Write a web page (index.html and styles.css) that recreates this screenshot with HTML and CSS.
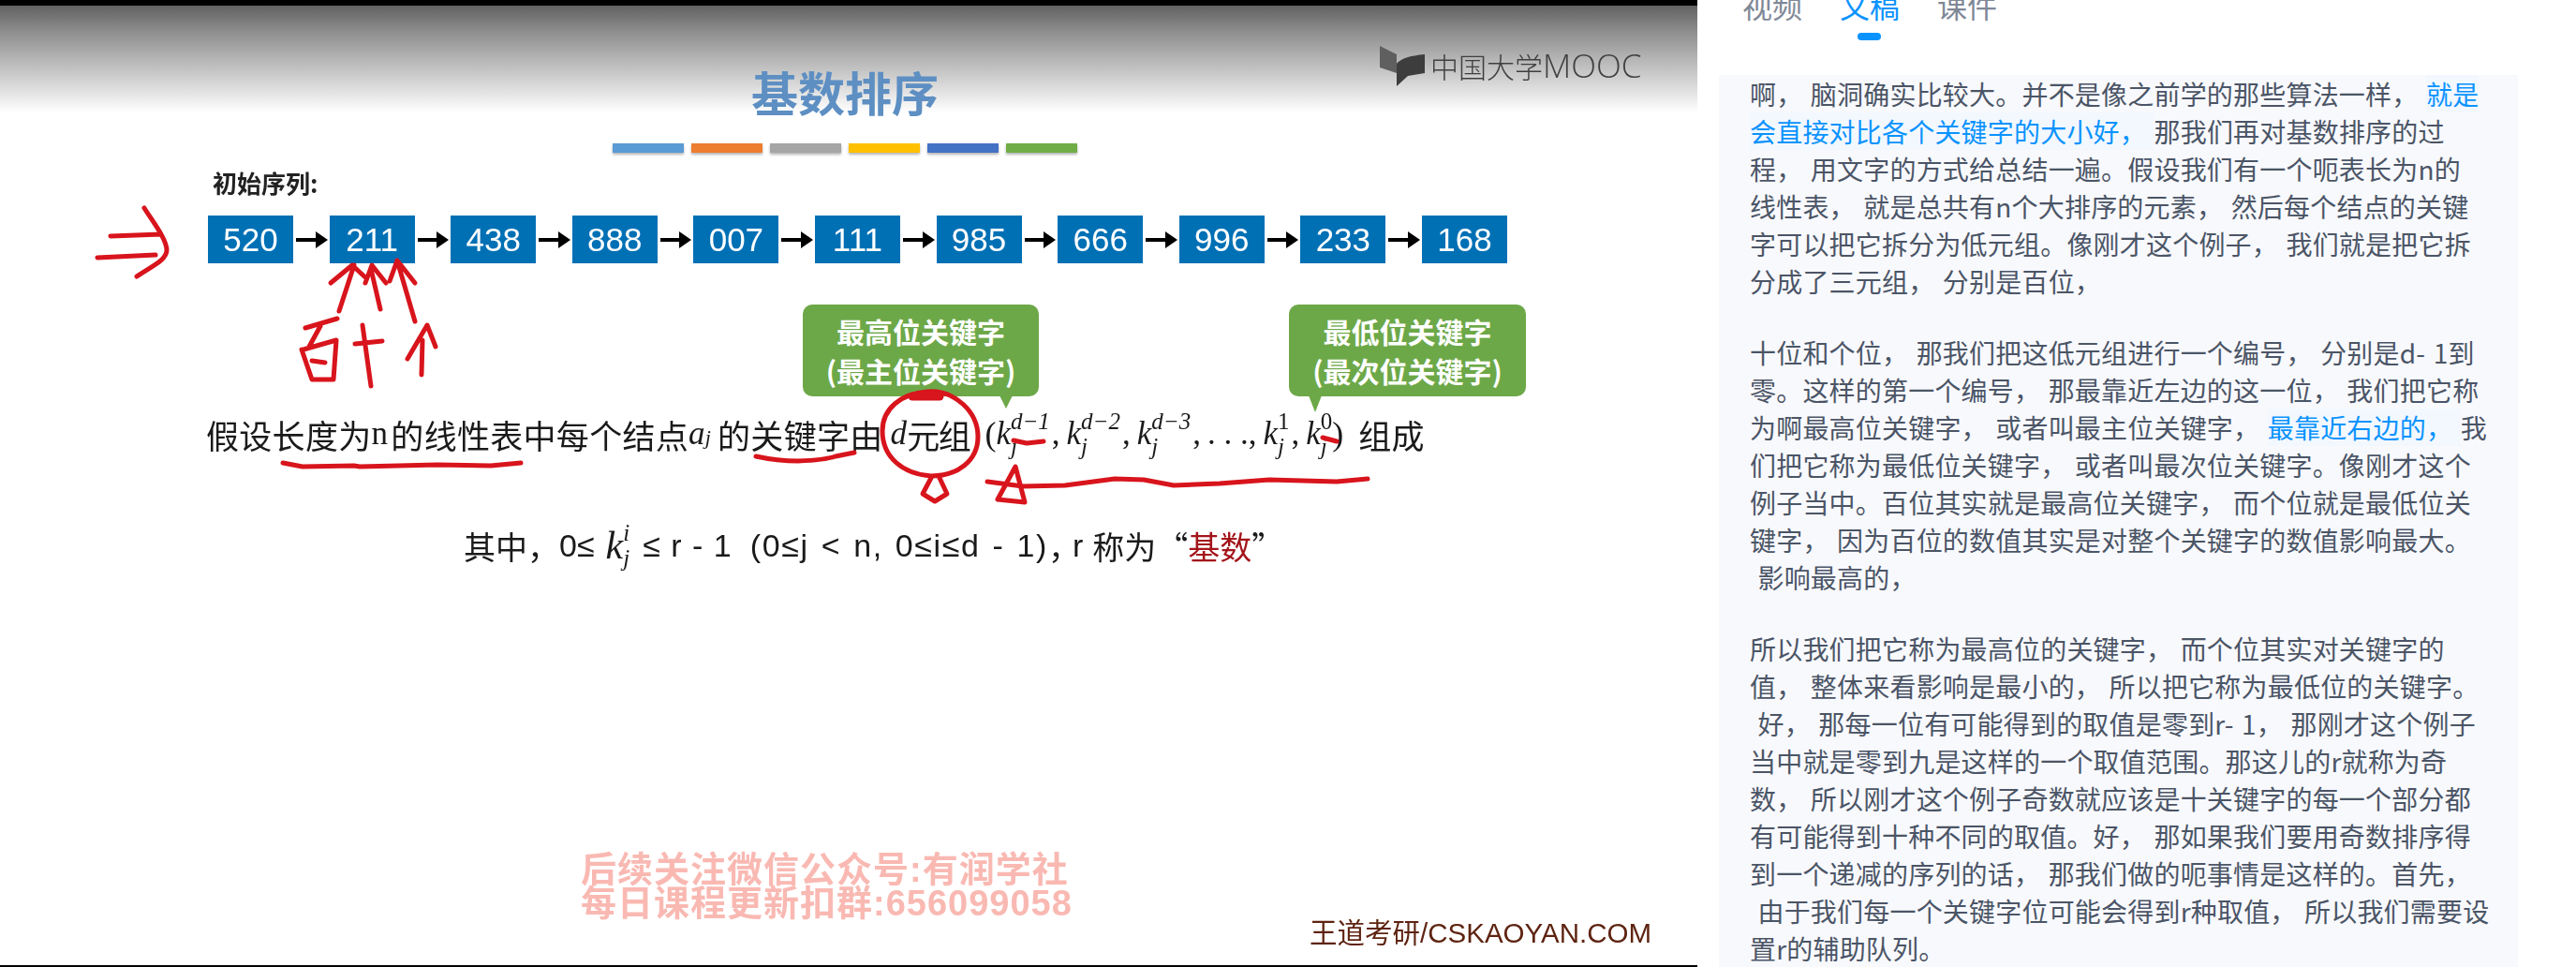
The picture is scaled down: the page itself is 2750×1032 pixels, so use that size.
FILE: index.html
```html
<!DOCTYPE html>
<html lang="zh-CN">
<head>
<meta charset="utf-8">
<title>基数排序</title>
<link rel="stylesheet" href="styles.css">
</head>
<body>
<main class="page">
  <section class="video">
    <div class="slide">
      <header class="slide-head">
        <h1 class="slide-title">基数排序</h1>
        <div class="logo">
          <svg class="logo-mark" viewBox="0 0 50 44" width="50" height="44">
            <path d="M0 1 L18 10 L18 30 L0 24 Z" fill="#5f5f5f"/>
            <path d="M18 20 Q24 12 48 10 L48 30 L30 33 L18 44 Z" fill="#3d3d3d"/>
          </svg>
          <span class="logo-cn">中国大学</span><span class="logo-en">MOOC</span>
        </div>
      </header>
      <div class="bars">
        <span class="bar bar-blue"></span><span class="bar bar-orange"></span><span class="bar bar-gray"></span><span class="bar bar-yellow"></span><span class="bar bar-indigo"></span><span class="bar bar-green"></span>
      </div>
      <p class="seq-label">初始序列:</p>
      <div class="seq">
        <span class="cell">520</span><span class="arrow"></span>
        <span class="cell">211</span><span class="arrow"></span>
        <span class="cell">438</span><span class="arrow"></span>
        <span class="cell">888</span><span class="arrow"></span>
        <span class="cell">007</span><span class="arrow"></span>
        <span class="cell">111</span><span class="arrow"></span>
        <span class="cell">985</span><span class="arrow"></span>
        <span class="cell">666</span><span class="arrow"></span>
        <span class="cell">996</span><span class="arrow"></span>
        <span class="cell">233</span><span class="arrow"></span>
        <span class="cell">168</span>
      </div>
      <div class="callouts">
        <div class="callout callout-high">最高位关键字<br>(最主位关键字)</div>
        <div class="callout callout-low">最低位关键字<br>(最次位关键字)</div>
      </div>
      <div class="sentence">
        <span>假设长度为</span><span class="serif letter-n">n</span><span>的线性表中每个结点</span><span class="term-a"><i>a</i><sub>j</sub></span><span>的关键字由</span><i class="serif d">d</i><span class="tight">元组</span>
        <span class="tuple">
          <span class="paren">(</span>
          <span class="term"><i class="k">k</i><span class="scripts"><i>d−1</i><i>j</i></span></span><span class="comma">,</span>
          <span class="term"><i class="k">k</i><span class="scripts"><i>d−2</i><i>j</i></span></span><span class="comma">,</span>
          <span class="term"><i class="k">k</i><span class="scripts"><i>d−3</i><i>j</i></span></span><span class="comma">,</span>
          <span class="dots">. . .</span><span class="comma">,</span>
          <span class="term"><i class="k">k</i><span class="scripts"><span>1</span><i>j</i></span></span><span class="comma">,</span>
          <span class="term"><i class="k">k</i><span class="scripts"><span>0</span><i>j</i></span></span>
          <span class="paren">)</span>
        </span>
        <span class="tail">组成</span>
      </div>
      <div class="range">
        <span>其中，</span><span class="sans">0≤</span>
        <span class="term range-term"><i class="k">k</i><span class="scripts"><i>i</i><i>j</i></span></span>
        <span class="sans expr">≤ r - 1</span>
        <span class="sans paren-group">(0≤j &lt; n, 0≤i≤d - 1)</span>
        <span class="after-paren">，</span><span class="sans">r</span><span class="name">称为“</span><span class="radix">基数</span><span>”</span>
      </div>
      <p class="watermark">后续关注微信公众号:有润学社<br>每日课程更新扣群:656099058</p>
      <p class="credit">王道考研/CSKAOYAN.COM</p>
    </div>
    <svg class="ink" viewBox="0 0 1812 1032" width="1812" height="1032" fill="none">
      <path d="M118 252 L172 250 M104 275 L166 272 M154 222 C162 235 178 255 178 267 C178 278 160 285 146 295"/>
      <path d="M362 332 L378 283 M353 302 L376 283 L390 296 M406 330 L396 287 M390 302 L397 283 L412 302 M443 343 L424 278 M416 300 L424 278 L443 302"/>
      <path d="M360 340 L326 350 M342 348 L330 370 M322 373 L333 405 L356 405 L359 363 L324 373 M333 385 L347 387"/>
      <path d="M379 367 L408 364 M387 347 L396 412"/>
      <path d="M435 383 L456 347 L465 370 M451 363 L450 400"/>
      <path d="M302 494 L323 498 L378 497 L384 498 L467 496 L524 497 L556 494"/>
      <path d="M807 487 Q830 492 852 492 Q880 491 892 487 L912 483"/>
      <path d="M990 418 C1020 416 1044 440 1044 466 C1044 492 1022 508 994 508 C964 506 942 488 942 460 C942 436 962 420 990 418 Z"/>
      <path class="thick" d="M974 423 L1003 423"/>
      <path d="M994 510 L985 527 L998 535 L1011 527 L1003 510"/>
      <path d="M1082 470 L1096 473 L1114 471 M1412 467 L1427 471"/>
      <path d="M1054 514 L1092 519 L1137 518 L1190 511 L1221 512 L1253 518 L1302 516 L1355 512 L1427 514 L1460 511"/>
      <path d="M1084 498 L1065 533 L1094 536 Z"/>
    </svg>
  </section>
  <aside class="side">
    <nav class="tabs">
      <span class="tab">视频</span>
      <span class="tab tab-active">文稿</span>
      <span class="tab">课件</span>
    </nav>
    <article class="transcript">
      <p>啊， 脑洞确实比较大。并不是像之前学的那些算法一样， <span class="hl">就是<br>会直接对比各个关键字的大小好， </span>那我们再对基数排序的过<br>程， 用文字的方式给总结一遍。假设我们有一个呃表长为n的<br>线性表， 就是总共有n个大排序的元素， 然后每个结点的关键<br>字可以把它拆分为低元组。像刚才这个例子， 我们就是把它拆<br>分成了三元组， 分别是百位，</p>
      <p>十位和个位， 那我们把这低元组进行一个编号， 分别是d- 1到<br>零。这样的第一个编号， 那最靠近左边的这一位， 我们把它称<br>为啊最高位关键字， 或者叫最主位关键字， <span class="hl">最靠近右边的， </span>我<br>们把它称为最低位关键字， 或者叫最次位关键字。像刚才这个<br>例子当中。百位其实就是最高位关键字， 而个位就是最低位关<br>键字， 因为百位的数值其实是对整个关键字的数值影响最大。<br>&nbsp;影响最高的，</p>
      <p>所以我们把它称为最高位的关键字， 而个位其实对关键字的<br>值， 整体来看影响是最小的， 所以把它称为最低位的关键字。<br>&nbsp;好， 那每一位有可能得到的取值是零到r- 1， 那刚才这个例子<br>当中就是零到九是这样的一个取值范围。那这儿的r就称为奇<br>数， 所以刚才这个例子奇数就应该是十关键字的每一个部分都<br>有可能得到十种不同的取值。好， 那如果我们要用奇数排序得<br>到一个递减的序列的话， 那我们做的呃事情是这样的。首先，<br>&nbsp;由于我们每一个关键字位可能会得到r种取值， 所以我们需要设<br>置r的辅助队列。</p>
    </article>
  </aside>
</main>
</body>
</html>
```

FILE: styles.css
```css
* { box-sizing: border-box; }
html, body { margin: 0; height: 100%; background: #fff; overflow: hidden; }
body { font-family: "Noto Sans CJK SC", "Noto Sans", sans-serif; }
p, h1 { margin: 0; }

.page { display: flex; width: 2750px; height: 1032px; overflow: hidden; }

/* video */
.video {
  position: relative;
  flex: 0 0 1812px;
  height: 1032px;
  border-top: 6px solid #000;
  border-bottom: 2px solid #000;
  background: #fff;
}
.slide { height: 1024px; filter: blur(0.6px); color: #1c1c1c; }
.slide-head {
  display: flex;
  align-items: flex-start;
  height: 114px;
  padding-left: 802px;
  background: linear-gradient(to bottom, #626262 0%, #8f8f8f 25%, #b5b5b5 50%, #dedede 78%, #fff 100%);
}
.slide-title {
  width: 200px;
  margin-top: 66px;
  font-size: 50px;
  line-height: 50px;
  font-weight: 700;
  color: #5e8fc3;
  white-space: nowrap;
}
.logo { display: flex; align-items: center; margin: 42px 0 0 471px; color: #3f3f3f; }
.logo-mark { margin-right: 4px; flex: none; }
.logo-cn { font-size: 30px; line-height: 44px; font-weight: 300; }
.logo-en { font-family: "Open Sans", sans-serif; font-size: 35px; line-height: 44px; font-weight: 300; }

.bars { display: flex; gap: 8px; margin: 33px 0 0 654px; }
.bar { width: 76px; height: 10px; box-shadow: 0 2px 3px rgba(0,0,0,.3); }
.bar-blue { background: #5b9bd5; }
.bar-orange { background: #ed7d31; }
.bar-gray { background: #a5a5a5; }
.bar-yellow { background: #ffc000; }
.bar-indigo { background: #4472c4; }
.bar-green { background: #70ad47; }

.seq-label { margin: 17px 0 0 227px; font-size: 26px; line-height: 30px; font-weight: 700; color: #222; }

.seq { display: flex; align-items: center; margin: 20px 0 0 222px; }
.cell {
  flex: 0 0 91px;
  height: 51px;
  background: #0070b5;
  color: #fff;
  font-family: "Liberation Sans", sans-serif;
  font-size: 35px;
  line-height: 51px;
  text-align: center;
}
.arrow { position: relative; flex: 0 0 38.6px; height: 4px; }
.arrow::before { content: ""; position: absolute; left: 3px; right: 12px; top: 0; height: 4px; background: #000; }
.arrow::after {
  content: "";
  position: absolute;
  right: 2px;
  top: -7px;
  border-left: 13px solid #000;
  border-top: 9px solid transparent;
  border-bottom: 9px solid transparent;
}

.callouts { display: flex; margin: 44px 0 0 857px; }
.callout {
  position: relative;
  height: 98px;
  border-radius: 10px;
  background: #6da848;
  color: #fff;
  font-size: 30px;
  line-height: 42px;
  font-weight: 700;
  text-align: center;
  padding-top: 7px;
}
.callout::after {
  content: "";
  position: absolute;
  top: 97px;
  border-top: 14px solid #6da848;
  border-left: 7px solid transparent;
  border-right: 7px solid transparent;
}
.callout-high { width: 252px; }
.callout-high::after { left: 210px; }
.callout-low { width: 253px; margin-left: 267px; }
.callout-low::after { left: 21px; border-top-width: 18px; }

.sentence, .range {
  display: flex;
  align-items: center;
  height: 50px;
  font-size: 35px;
  color: #1a1a1a;
  white-space: nowrap;
}
.sentence { margin: 15px 0 0 220px; letter-spacing: .3px; }
.range { margin: 69px 0 0 495px; font-size: 34px; }
.serif { font-family: "Liberation Serif", serif; }
.letter-n { margin-right: 3px; }
.d { margin: 0 0 0 8px; }
.tight { letter-spacing: -1.5px; }
.term-a { font-family: "Liberation Serif", serif; display: inline-flex; align-items: baseline; width: 31px; }
.term-a sub { font-size: 22px; font-style: italic; line-height: 0; }
.tuple { display: inline-flex; align-items: center; margin-left: 16px; font-family: "Liberation Serif", serif; letter-spacing: 0; }
.paren { font-size: 36px; }
.term { display: inline-flex; align-items: center; font-family: "Liberation Serif", serif; letter-spacing: 0; }
.k { font-size: 35px; }
.scripts { display: inline-flex; flex-direction: column; font-size: 25px; line-height: 27px; }
.comma { font-size: 35px; margin: 0 7px 0 2px; }
.dots { font-size: 35px; margin: 0 -2px 0 0; }
.tail { margin-left: 16px; }
.sans { font-family: "Liberation Sans", sans-serif; }
.range-term { margin: 0 14px 0 12px; }
.range-term .k { font-size: 42px; }
.expr { word-spacing: 2px; }
.paren-group { margin-left: 20px; letter-spacing: 1.6px; word-spacing: 2px; }
.after-paren { margin-right: -8px; }
.name { margin-left: 10px; }
.radix { color: #a3151b; }

.watermark {
  margin: 303px 0 0 620px;
  font-family: "Liberation Sans", "Noto Sans CJK SC", sans-serif;
  font-size: 38px;
  line-height: 36px;
  font-weight: 700;
  letter-spacing: 1px;
  color: #f9b9b2;
  white-space: nowrap;
}
.credit {
  margin-top: -1px;
  padding-right: 49px;
  text-align: right;
  font-family: "Liberation Sans", "Noto Sans CJK SC", sans-serif;
  font-size: 29.5px;
  line-height: 30px;
  color: #5e2411;
  white-space: nowrap;
}

.ink { position: absolute; left: 0; top: -6px; pointer-events: none; }
.ink path { stroke: #d8141c; stroke-width: 5; stroke-linecap: round; stroke-linejoin: round; }
.ink .thick { stroke-width: 9; }

/* side */
.side { flex: 1; min-width: 0; padding-left: 23px; }
.tabs { display: flex; gap: 40px; height: 97px; margin-top: -17px; padding-left: 25px; }
.tab { position: relative; font-size: 32px; line-height: 44px; color: #7f8897; }
.tab-active { color: #0a93ff; }
.tab-active::after {
  content: "";
  position: absolute;
  left: 19px;
  top: 52px;
  width: 25px;
  height: 8px;
  border-radius: 4px;
  background: #0a93ff;
}
.transcript {
  width: 853px;
  height: 960px;
  padding: 0 0 0 33px;
  background: #f8f9fd;
  font-size: 28px;
  line-height: 40px;
  letter-spacing: .2px;
  word-spacing: 2px;
  color: #4b5566;
  white-space: nowrap;
}
.transcript p { margin-bottom: 36px; }
.hl { color: #0a93ff; background: #f3f8fe; }
```
